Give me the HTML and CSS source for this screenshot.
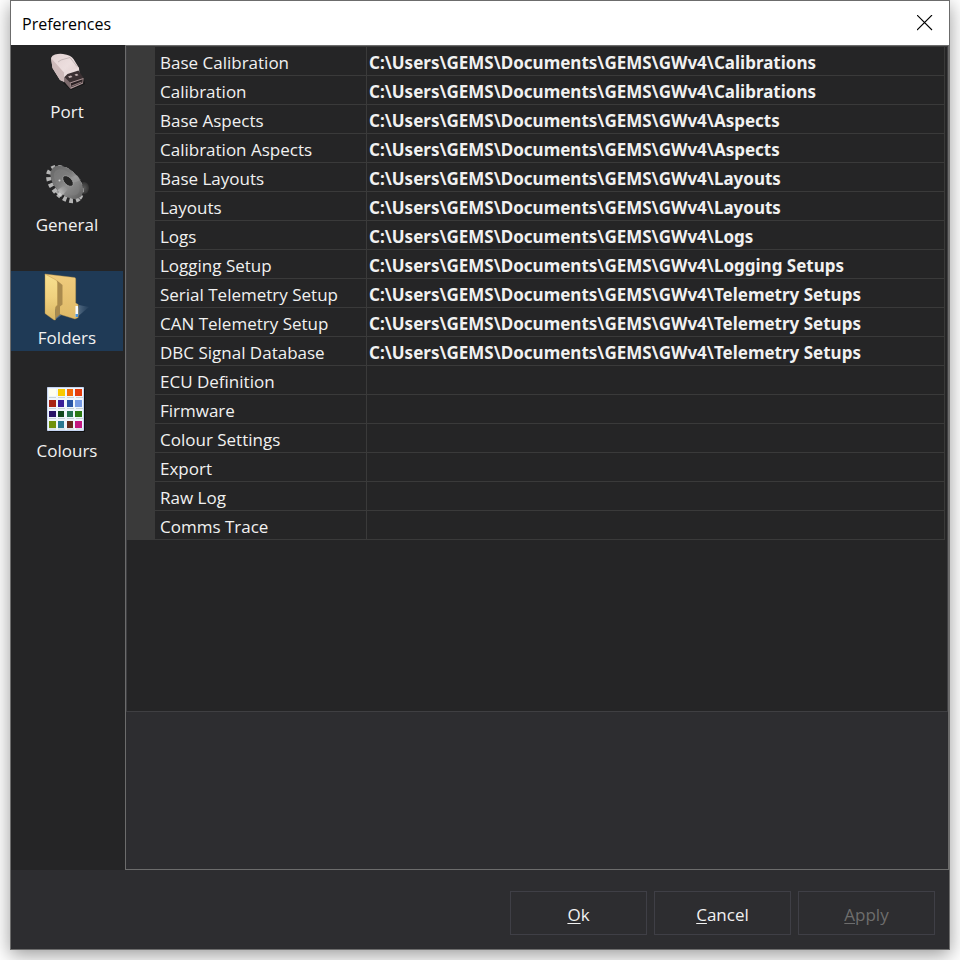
FILE: index.html
```
<!DOCTYPE html>
<html lang="en">
<head>
<meta charset="utf-8">
<title>Preferences</title>
<link rel="stylesheet" href="styles.css">
</head>
<body>
<div class="window">
  <header class="titlebar">
    <h1 class="title">Preferences</h1>
    <button class="close" type="button" aria-label="Close">
      <svg width="16" height="16" viewBox="0 0 16 16"><path d="M0 0l15 15M15 0l-15 15" stroke="#000" stroke-width="1.100" fill="none"/></svg>
    </button>
  </header>
  <div class="content">
    <nav class="sidebar">
      <a class="item" href="#port">
        <svg class="icon" width="48" height="48" viewBox="0 0 48 48">
          <defs>
            <linearGradient id="usb" x1="0" y1="0" x2="1" y2="1"><stop offset="0" stop-color="#e2d2d2"/><stop offset=".5" stop-color="#ecdede"/><stop offset="1" stop-color="#d8c6c6"/></linearGradient>
          </defs>
          <path d="M20 34l8 7 14-6-1-5z" fill="#181818"/>
          <path d="M8 9Q9 6 12 5.500Q16 4.500 20 5Q28 6 30.500 10L36 19l.5 6-15 8-4.500-2L9.500 19z" fill="url(#usb)"/>
          <path d="M8 9l13 14.500.5 9.500-4.500-2L9.500 19z" fill="#cdbaba"/>
          <path d="M21 23.500L36 18.500v5L21.500 30z" fill="#eadcdc"/>
          <path d="M15 13l3-2 9-2.500 7 9" fill="none" stroke="#b5a7a7" stroke-width=".7"/>
          <path d="M21.500 28l3-3 11-3.500 5 7.500-.5 5.500-12.500 5.500-6-7z" fill="#3b3032"/>
          <path d="M27 33.500l13.500-4.500-.5 5.500-12.500 5.500z" fill="#b39c9d"/>
          <path d="M27.700 34.300l12-4-.3 3.500-11 4.500z" fill="#2a2123"/>
          <path d="M28.500 36.500l10-4v1.200l-10 4z" fill="#8a7577"/>
          <path d="M25 27.500l3-1 1.500 1.500-3 1zM31.500 25.500l2.500-.8 1.500 1.500-2.500.8z" fill="#c4b1b1"/>
          <path d="M21.500 28l5.500 5.500.5 6.500-6-7z" fill="#7e6c6e"/>
        </svg>
        <span>Port</span>
      </a>
      <a class="item" href="#general">
        <svg class="icon" width="48" height="48" viewBox="0 0 48 48">
          <defs>
            <linearGradient id="gear" x1="0" y1="0" x2="1" y2="0"><stop offset="0" stop-color="#6a6a6a"/><stop offset=".4" stop-color="#7b7b7b"/><stop offset=".55" stop-color="#969696"/><stop offset="1" stop-color="#626262"/></linearGradient>
            <linearGradient id="shine" x1="0" y1="1" x2="1" y2="0"><stop offset="0" stop-color="#f4f4f4"/><stop offset="1" stop-color="#999" stop-opacity="0"/></linearGradient>
            <radialGradient id="hub"><stop offset="0" stop-color="#5a5a5a"/><stop offset="1" stop-color="#343434"/></radialGradient>
          </defs>
          <ellipse cx="41" cy="26" rx="5" ry="6" fill="url(#hub)"/>
          <g transform="rotate(46 23 21)">
            <ellipse cx="23" cy="22.500" rx="20" ry="12" fill="none" stroke="#b4b4b4" stroke-width="5" stroke-dasharray="3.500 3"/>
            <ellipse cx="23" cy="20" rx="20" ry="12" fill="url(#gear)"/>
            <ellipse cx="23" cy="20" rx="16" ry="9" fill="#858585" fill-opacity=".4"/>
          </g>
          <path d="M20 24l-8 6 6 5 7-8z" fill="url(#shine)"/>
          <path d="M26 16l8-3 4 5-8 3z" fill="#aaa" fill-opacity=".35"/>
          <ellipse cx="25" cy="19" rx="6.500" ry="3.800" transform="rotate(46 25 19)" fill="#262626" stroke="#a4a4a4" stroke-width=".8"/>
          <circle cx="16.500" cy="18.500" r="1" fill="#ccc"/>
        </svg>
        <span>General</span>
      </a>
      <a class="item selected" href="#folders" aria-current="page">
        <svg class="icon" width="48" height="48" viewBox="0 0 48 48">
          <defs>
            <linearGradient id="front" x1="0" y1="0" x2="0" y2="1"><stop offset="0" stop-color="#f8e08f"/><stop offset=".5" stop-color="#f0d17f"/><stop offset="1" stop-color="#d9b664"/></linearGradient>
            <linearGradient id="back" x1="0" y1="0" x2="0" y2="1"><stop offset="0" stop-color="#f0cc7e"/><stop offset="1" stop-color="#dfba67"/></linearGradient>
            <linearGradient id="cast" x1="0" y1="0" x2="1" y2="0"><stop offset="0" stop-color="#71869b" stop-opacity=".8"/><stop offset="1" stop-color="#526c86" stop-opacity=".1"/></linearGradient>
          </defs>
          <path d="M33 43l13-11-10-2z" fill="url(#cast)"/>
          <path d="M12.500 40l7.500-1-7.500 5.500z" fill="#526c86"/>
          <path d="M2-1l29.500 3.500q1.200 0 1.200 1.500v24l2.500 1.500v13l-3.200 1.500L19 40l-5-2z" fill="url(#back)" stroke="#b99348" stroke-width=".4"/>
          <path d="M14 5.500l5.500 4.500v19.500l-2.500 2v8l-4.500 4z" fill="#a98a4e"/>
          <path d="M2-1l11 6q1.500 1 1.500 3v22l-2 2v13L11 45 2 38.500z" fill="url(#front)" stroke="#b18c43" stroke-width=".4"/>
          <path d="M32.500 31H35v11h-2.500z" fill="#f7fbff"/><path d="M32.500 39H35v3h-2.500z" fill="#4b94dc"/>
        </svg>
        <span>Folders</span>
      </a>
      <a class="item" href="#colours">
        <svg class="icon" width="48" height="48" viewBox="1 1 48 48">
          <path d="M7 2h36v43H7z" fill="#111"/>
          <path d="M5.500.5h36v43h-36z" fill="#eff6fc" stroke="#c6d5f2"/>
          <path d="M7 2h7v7H7z" fill="#fffff0"/><path d="M16 2h7v7h-7z" fill="#f8ca00"/><path d="M25 2h6v7h-6z" fill="#f36a08"/><path d="M33 2h7v7h-7z" fill="#e43c0d"/>
          <path d="M7 13h7v7H7z" fill="#a82413"/><path d="M16 13h6v7h-6z" fill="#391e98"/><path d="M25 13h6v7h-6z" fill="#2854a4"/><path d="M33 13h7v7h-7z" fill="#779be3"/>
          <path d="M7 24h7v6H7z" fill="#281465"/><path d="M16 24h6v6h-6z" fill="#10461c"/><path d="M25 24h6v6h-6z" fill="#257250"/><path d="M33 24h7v6h-7z" fill="#2d7b14"/>
          <path d="M7 34h7v7H7z" fill="#71920c"/><path d="M16 34h6v7h-6z" fill="#2b7890"/><path d="M25 34h6v7h-6z" fill="#652b1c"/><path d="M33 34h7v7h-7z" fill="#c4187f"/>
          <path d="M7 10.500h34M7 21.500h34M7 31.500h34M7 42h34" stroke="#c9d4d8" stroke-dasharray="7 2"/>
        </svg>
        <span>Colours</span>
      </a>
    </nav>
    <main class="panel">
      <div class="grid">
        <table class="props">
          <tbody>
            <tr><td class="gutter"></td><th scope="row">Base Calibration</th><td>C:\Users\GEMS\Documents\GEMS\GWv4\Calibrations</td></tr>
            <tr><td class="gutter"></td><th scope="row">Calibration</th><td>C:\Users\GEMS\Documents\GEMS\GWv4\Calibrations</td></tr>
            <tr><td class="gutter"></td><th scope="row">Base Aspects</th><td>C:\Users\GEMS\Documents\GEMS\GWv4\Aspects</td></tr>
            <tr><td class="gutter"></td><th scope="row">Calibration Aspects</th><td>C:\Users\GEMS\Documents\GEMS\GWv4\Aspects</td></tr>
            <tr><td class="gutter"></td><th scope="row">Base Layouts</th><td>C:\Users\GEMS\Documents\GEMS\GWv4\Layouts</td></tr>
            <tr><td class="gutter"></td><th scope="row">Layouts</th><td>C:\Users\GEMS\Documents\GEMS\GWv4\Layouts</td></tr>
            <tr><td class="gutter"></td><th scope="row">Logs</th><td>C:\Users\GEMS\Documents\GEMS\GWv4\Logs</td></tr>
            <tr><td class="gutter"></td><th scope="row">Logging Setup</th><td>C:\Users\GEMS\Documents\GEMS\GWv4\Logging Setups</td></tr>
            <tr><td class="gutter"></td><th scope="row">Serial Telemetry Setup</th><td>C:\Users\GEMS\Documents\GEMS\GWv4\Telemetry Setups</td></tr>
            <tr><td class="gutter"></td><th scope="row">CAN Telemetry Setup</th><td>C:\Users\GEMS\Documents\GEMS\GWv4\Telemetry Setups</td></tr>
            <tr><td class="gutter"></td><th scope="row">DBC Signal Database</th><td>C:\Users\GEMS\Documents\GEMS\GWv4\Telemetry Setups</td></tr>
            <tr><td class="gutter"></td><th scope="row">ECU Definition</th><td></td></tr>
            <tr><td class="gutter"></td><th scope="row">Firmware</th><td></td></tr>
            <tr><td class="gutter"></td><th scope="row">Colour Settings</th><td></td></tr>
            <tr><td class="gutter"></td><th scope="row">Export</th><td></td></tr>
            <tr><td class="gutter"></td><th scope="row">Raw Log</th><td></td></tr>
            <tr><td class="gutter"></td><th scope="row">Comms Trace</th><td></td></tr>
          </tbody>
        </table>
      </div>
      <div class="help"></div>
    </main>
  </div>
  <footer class="actions">
    <button class="btn" type="button"><u>O</u>k</button>
    <button class="btn" type="button"><u>C</u>ancel</button>
    <button class="btn" type="button" disabled><u>A</u>pply</button>
  </footer>
</div>
</body>
</html>
```
FILE: styles.css
```
* {
  box-sizing: border-box;
}

body {
  margin: 0;
  background: #fff;
  font-family: "Open Sans", "Noto Sans", sans-serif;
  font-size: 17px;
  line-height: 24px;
  color: #f1f1f1;
}

.window {
  display: flex;
  flex-direction: column;
  min-height: calc(100vh - 10px);
  margin: 0 10px 10px;
  border: 1px solid #6c6c6c;
  background: #2d2d30;
  box-shadow: 0 5px 18px rgba(0, 0, 0, 0.4);
}

.titlebar {
  display: flex;
  align-items: center;
  justify-content: space-between;
  height: 44px;
  padding: 0 16px 0 11px;
  background: #fff;
  color: #000;
}

.title {
  margin: 0;
  padding-top: 2px;
  font-size: 16px;
  font-weight: 400;
}

.close {
  display: flex;
  padding: 0;
  border: 0;
  background: none;
}

.content {
  display: flex;
  flex: 1;
}

.sidebar {
  display: flex;
  flex-direction: column;
  gap: 33px;
  width: 114px;
  padding-right: 2px;
  background: #252526;
}

.item {
  display: flex;
  flex-direction: column;
  align-items: center;
  gap: 3px;
  height: 80px;
  padding-top: 4px;
  color: inherit;
  text-decoration: none;
}

.icon {
  overflow: visible;
}

.selected {
  background: #1f3a56;
}

.panel {
  display: flex;
  flex: 1;
  flex-direction: column;
  min-width: 0;
  border: 1px solid #6c6c6c;
}

.grid {
  flex: 1;
  padding-right: 2px;
  border: 1px solid #3f3f42;
  border-top-color: #3a3a3a;
  background: #252526;
}

.props {
  width: 100%;
  border-spacing: 0;
  table-layout: fixed;
}

.props th,
.props td {
  height: 29px;
  padding: 4px 0 0 5px;
  border: 0 solid #3a3a3a;
  border-width: 0 1px 1px 0;
  text-align: left;
  white-space: nowrap;
  font-weight: 400;
}

.props th {
  width: 212px;
}

.props td {
  padding-left: 2px;
  font-family: "Noto Sans", "Open Sans", sans-serif;
  font-weight: 700;
}

.props .gutter {
  width: 28px;
  padding: 0;
  background: #3a3a3a;
}

.help {
  height: 157px;
}

.actions {
  display: flex;
  justify-content: flex-end;
  gap: 7px;
  padding: 21px 14px 14px;
}

.btn {
  width: 137px;
  height: 44px;
  padding: 3px 0 0;
  border: 1px solid #3f3f46;
  background: #2d2d30;
  color: #f1f1f1;
  font: inherit;
}

.btn u {
  text-underline-offset: 2px;
}

.btn:disabled {
  color: #6d6d6d;
}
```
